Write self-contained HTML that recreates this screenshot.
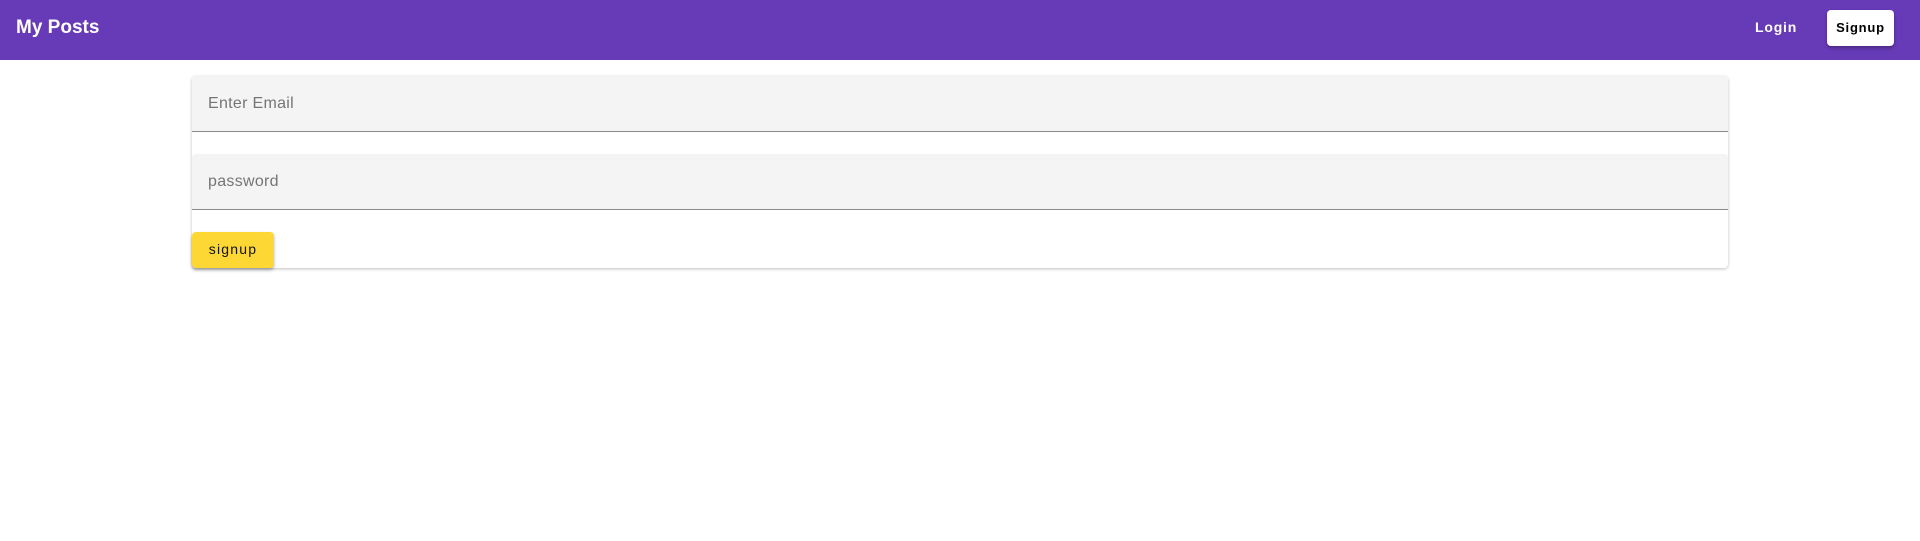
<!DOCTYPE html>
<html><head><style>
*{box-sizing:border-box;margin:0;padding:0}
body{width:1920px;height:541px;background:#fff;font-family:"Liberation Sans",sans-serif;position:relative;overflow:hidden}
.bar{position:absolute;left:0;top:0;width:1920px;height:60px;background:#673ab7}
.title{position:absolute;left:16px;top:16px;color:#fff;font-size:19px;font-weight:bold;line-height:24px}
.login{position:absolute;left:1755px;top:18px;color:#fff;font-size:14px;font-weight:bold;letter-spacing:.8px;line-height:18px}
.sbtn{position:absolute;left:1827px;top:10px;width:67px;height:36px;background:#fff;border-radius:4px;box-shadow:0 2px 3px rgba(0,0,0,.3);color:#000;font-size:13px;font-weight:bold;letter-spacing:.8px;text-align:center;line-height:36px}
.card{position:absolute;left:192px;top:76px;width:1536px;height:192px;border-radius:4px;box-shadow:0 1px 3px rgba(0,0,0,.25);background:#fff}
.f{position:absolute;left:0;width:1536px;height:56px;background:#f4f4f4;border-bottom:1px solid #8a8a8a;border-radius:4px 4px 0 0;color:#757575;font-size:16px;padding-left:16px;line-height:56px;letter-spacing:.3px}
.go{position:absolute;left:0;top:156px;width:82px;height:36px;background:#fdd835;border-radius:4px;box-shadow:0 2px 3px rgba(0,0,0,.3);font-size:14px;letter-spacing:1.2px;text-align:center;line-height:34px;color:#111}
</style></head><body>
<div class="bar"><div class="title">My Posts</div><div class="login">Login</div><div class="sbtn">Signup</div></div>
<div class="card">
<div class="f" style="top:0">Enter Email</div>
<div class="f" style="top:78px">password</div>
<div class="go">signup</div>
</div>
</body></html>
